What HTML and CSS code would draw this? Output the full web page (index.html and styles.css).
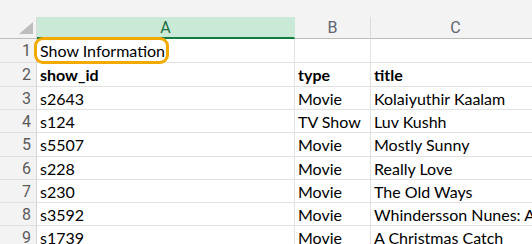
FILE: index.html
```html
<!DOCTYPE html>
<html lang="en">
<head>
  <meta charset="UTF-8">
  <title>Show Information</title>
  <link rel="stylesheet" href="styles.css">
</head>
<body>

<div class="topbar"></div>

<div class="sheet">
  <div class="row head">
    <div class="num corner"><span class="tri"></span></div>
    <div class="cell col-a sel">A</div>
    <div class="cell col-b">B</div>
    <div class="cell col-c">C</div>
  </div>

  <div class="row r24">
    <div class="num">1</div>
    <div class="cell col-a active">Show Information<span class="focus"></span></div>
    <div class="cell col-b"></div>
    <div class="cell col-c"></div>
  </div>
  <div class="row r24 bold">
    <div class="num">2</div>
    <div class="cell col-a">show_id</div>
    <div class="cell col-b">type</div>
    <div class="cell col-c">title</div>
  </div>
  <div class="row">
    <div class="num">3</div>
    <div class="cell col-a">s2643</div>
    <div class="cell col-b">Movie</div>
    <div class="cell col-c">Kolaiyuthir Kaalam</div>
  </div>
  <div class="row">
    <div class="num">4</div>
    <div class="cell col-a">s124</div>
    <div class="cell col-b">TV Show</div>
    <div class="cell col-c">Luv Kushh</div>
  </div>
  <div class="row r24">
    <div class="num">5</div>
    <div class="cell col-a">s5507</div>
    <div class="cell col-b">Movie</div>
    <div class="cell col-c">Mostly Sunny</div>
  </div>
  <div class="row">
    <div class="num">6</div>
    <div class="cell col-a">s228</div>
    <div class="cell col-b">Movie</div>
    <div class="cell col-c">Really Love</div>
  </div>
  <div class="row">
    <div class="num">7</div>
    <div class="cell col-a">s230</div>
    <div class="cell col-b">Movie</div>
    <div class="cell col-c">The Old Ways</div>
  </div>
  <div class="row">
    <div class="num">8</div>
    <div class="cell col-a">s3592</div>
    <div class="cell col-b">Movie</div>
    <div class="cell col-c">Whindersson Nunes: A</div>
  </div>
  <div class="row">
    <div class="num">9</div>
    <div class="cell col-a">s1739</div>
    <div class="cell col-b">Movie</div>
    <div class="cell col-c">A Christmas Catch</div>
  </div>
</div>

</body>
</html>
```

FILE: styles.css
```css
* { margin: 0; padding: 0; box-sizing: border-box; }

body {
  font-family: Lato, 'Liberation Sans', sans-serif;
  font-size: 16px;
  color: #000;
  background: #fff;
  width: 532px;
  height: 244px;
  overflow: hidden;
}

.topbar {
  height: 17px;
  background: #f3f3f3;
}

/* Grid */
.sheet {
  width: 532px;
  overflow: hidden;
}

.row {
  display: flex;
  height: 23px;
}

.row.r24 { height: 24px; }

.row.bold .cell { font-weight: 700; }

.num {
  flex: 0 0 37px;
  background: #f3f3f3;
  border-right: 1px solid #d4d4d4;
  border-bottom: 1px solid #e1e1e1;
  color: #5b5b5b;
  font-family: Roboto, 'Liberation Sans', sans-serif;
  font-size: 16px;
  padding-right: 5px;
  display: flex;
  align-items: center;
  justify-content: flex-end;
}

.cell {
  border-right: 1px solid #e1e1e1;
  border-bottom: 1px solid #e1e1e1;
  padding-left: 3px;
  display: flex;
  align-items: center;
  white-space: nowrap;
  overflow: hidden;
}

.col-a { flex: 0 0 258px; }
.col-b { flex: 0 0 76px; }
.col-c { flex: 0 0 170px; border-right: none; }

/* Column headers */
.head { height: 22px; }

.head .num,
.head .cell {
  background: #f3f3f3;
  border-bottom: 1px solid #bdbdbd;
  border-right: 1px solid #dadada;
  justify-content: center;
  color: #5f6670;
  font-family: Roboto, 'Liberation Sans', sans-serif;
  font-size: 16px;
  padding: 0;
}

.head .cell.sel {
  background: #cae9d6;
  color: #1e6e40;
  border-bottom: 2px solid #107c41;
  border-right: 1px solid #cae9d6;
}

.corner {
  position: relative;
}

.tri {
  position: absolute;
  right: 3px;
  bottom: 4px;
  width: 0;
  height: 0;
  border-left: 14px solid transparent;
  border-bottom: 12px solid #bdbdbd;
}

/* Selected cell ring */
.cell.active {
  position: relative;
  overflow: visible;
  z-index: 1;
}

.focus {
  position: absolute;
  left: -3px;
  top: -2px;
  width: 135px;
  height: 27px;
  border: 3px solid #f2a900;
  border-radius: 9px;
}
```
